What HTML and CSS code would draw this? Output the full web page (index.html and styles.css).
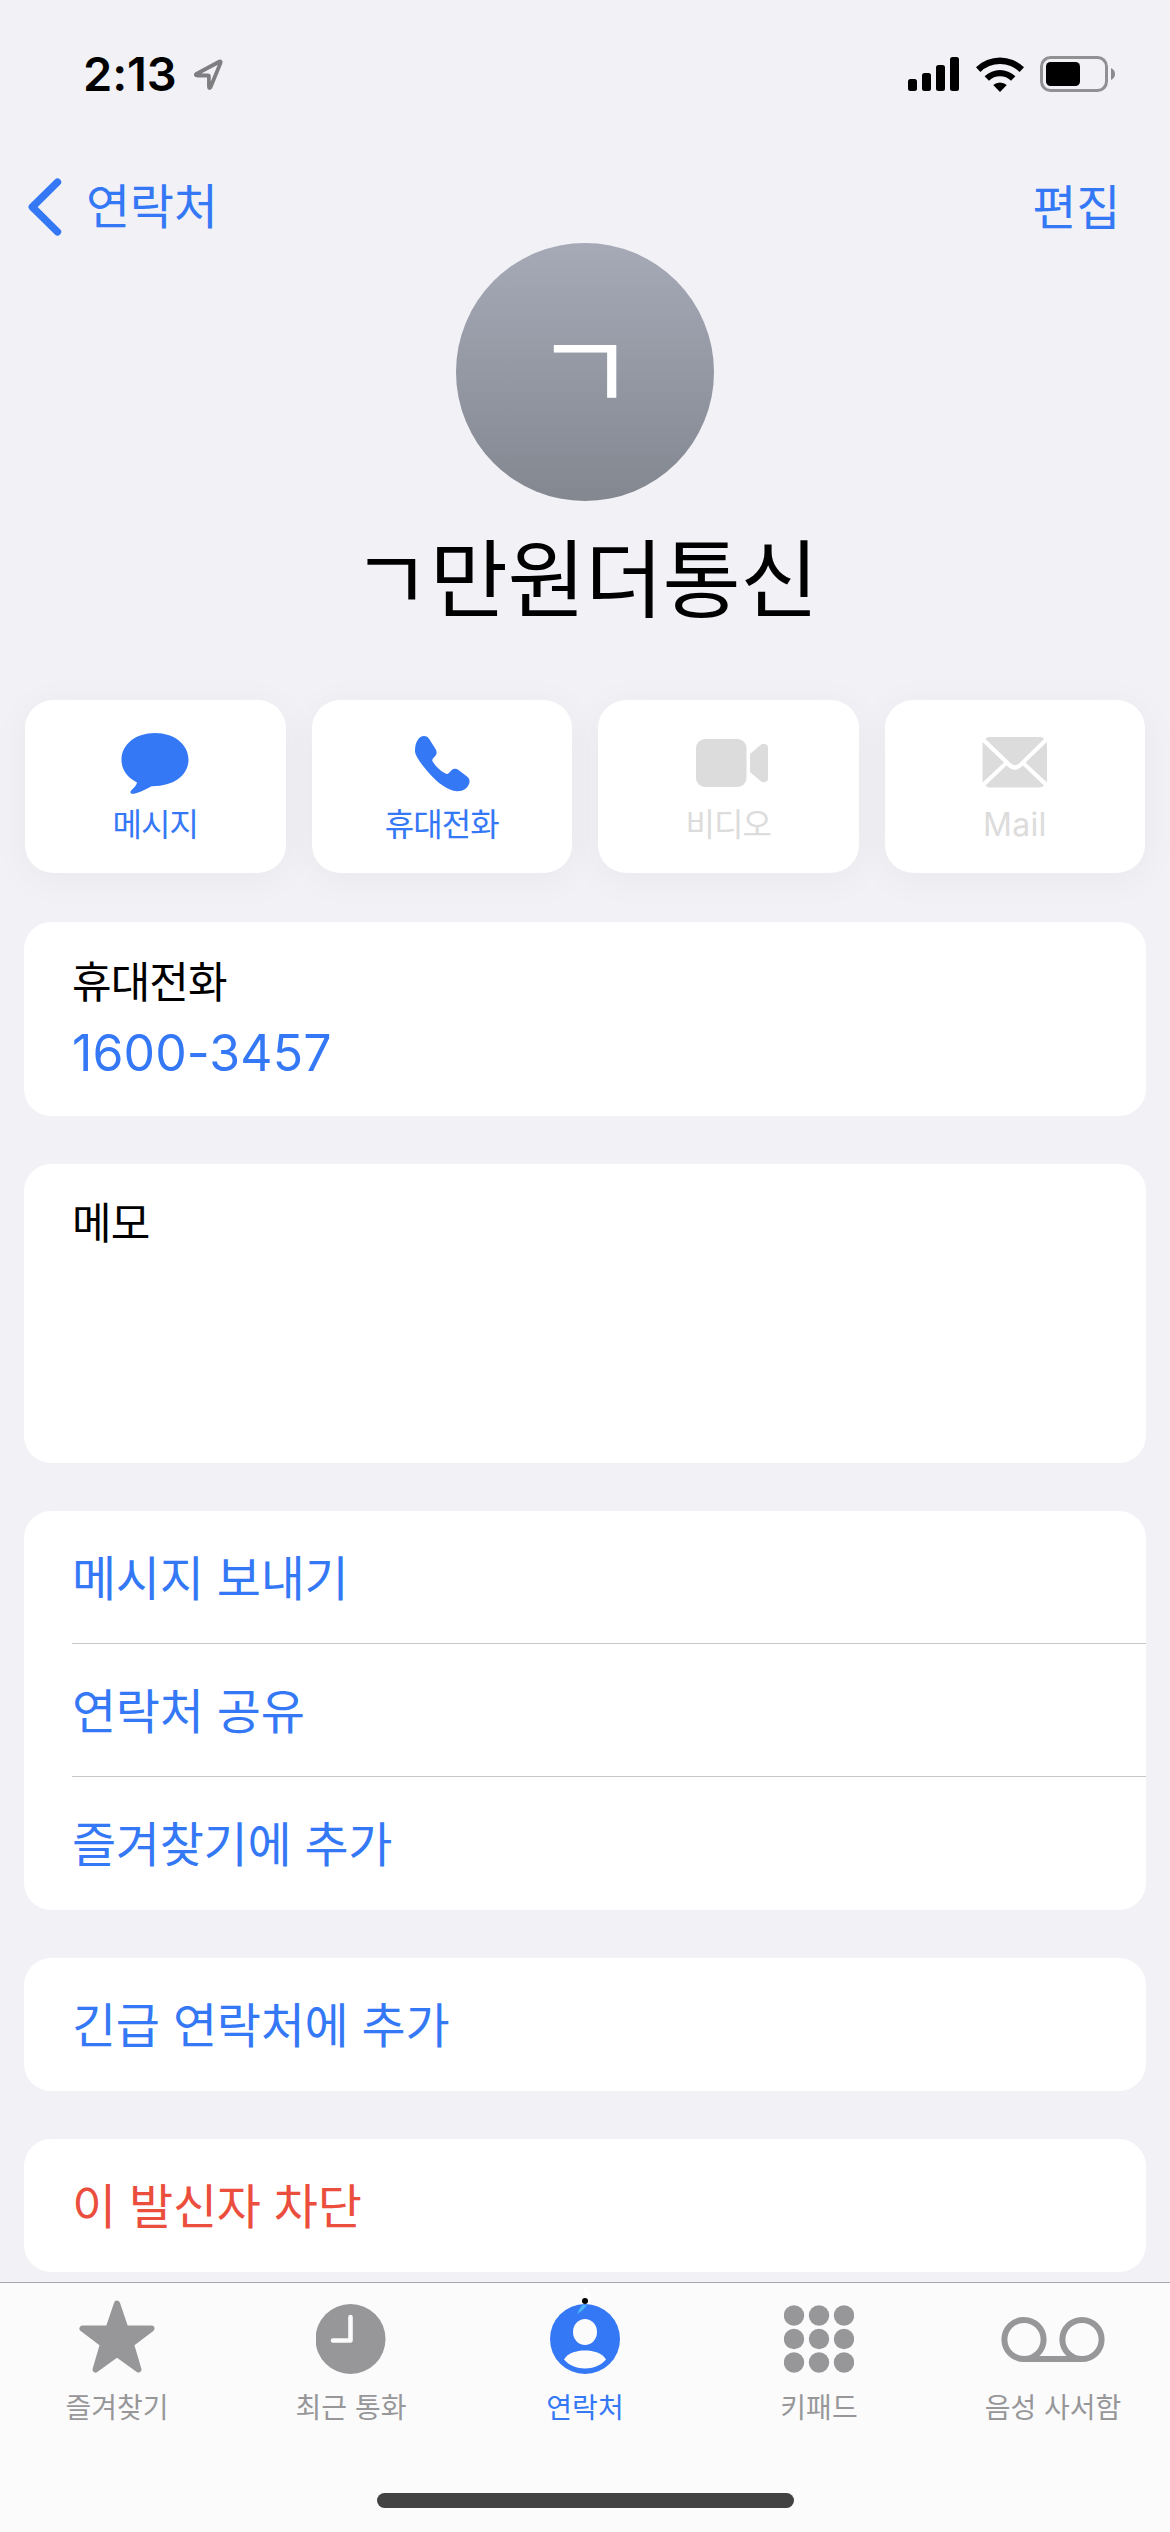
FILE: index.html
```html
<!DOCTYPE html>
<html lang="ko">
<head>
<meta charset="utf-8">
<title>연락처</title>
<link rel="stylesheet" href="styles.css">
</head>
<body>
<div class="screen">
  <header class="status">
    <div class="status-left">
      <span class="time">2:13</span>
      <svg class="location" width="29" height="31" viewBox="0 0 28 28" preserveAspectRatio="none"><path d="M2.2 13.6 24.6 2.4Q26.2 1.8 25.6 3.6L16 25.4Q14.6 27 14.4 25V15.6Q14.4 14.8 13.4 14.8H3Q1 14.6 2.2 13.6Z" fill="none" stroke="#7f7f82" stroke-width="3.6" stroke-linejoin="round"/></svg>
    </div>
    <div class="status-right">
      <svg width="52" height="34" viewBox="0 0 52 34"><rect y="22" width="9" height="12" rx="2.5"/><rect x="14" y="16" width="9" height="18" rx="2.5"/><rect x="28" y="8" width="9" height="26" rx="2.5"/><rect x="42" width="9" height="34" rx="2.5"/></svg>
      <svg class="wifi" width="48" height="36" viewBox="0 0 48 36"><path d="M0 11.3A34.5 34.5 0 0 1 48 11.3L43.6 15.9A28 28 0 0 0 4.4 15.9ZM8.600 20.200A22.300 22.300 0 0 1 39.400 20.200L35 24.800A15.800 15.800 0 0 0 13 24.800ZM17.200 29.100A9.900 9.900 0 0 1 30.800 29.100L24 36Z"/></svg>
      <svg class="battery" width="76" height="36" viewBox="0 0 76 36"><rect x="1.5" y="1.5" width="65" height="33" rx="9" fill="none" stroke="#919194" stroke-width="3"/><rect x="6" y="6" width="34" height="24" rx="4.5"/><path d="M71 12Q75 14 75 18T71 24Z" fill="#8b8b8e"/></svg>
    </div>
  </header>

  <nav class="navbar">
    <a class="back">
      <svg width="34" height="58" viewBox="0 0 34 58"><path d="M29.5 4.2 4.3 29 29.5 53.8" fill="none" stroke="currentColor" stroke-width="7.4" stroke-linecap="round" stroke-linejoin="round"/></svg>
      <span>연락처</span>
    </a>
    <a>편집</a>
  </nav>

  <section class="profile">
    <div class="avatar"><span>ㄱ</span></div>
    <h1>ㄱ만원더통신</h1>
  </section>

  <section class="actions">
    <a class="action">
      <svg width="68" height="62" viewBox="0 0 68 62"><path d="M34 1C53 1 67.500 13.500 67.500 31C67.500 48 53 61 30.500 60.500C25 64 16 69 11.500 69C9 69 9 66.500 10.500 65C13 62.500 15.500 59.500 16 56.500C6 50.500 .5 42 .5 31C.5 13.500 15 1 34 1Z" transform="scale(1 .895)" fill="currentColor"/></svg>
      <span>메시지</span>
    </a>
    <a class="action">
      <svg width="56" height="62" viewBox="0 0 56 62"><path d="M1 19C1 10 5 4 10 4C12.500 4 14 5 15.200 7L21.500 17C23.300 20 22.800 22 21 24.300L18.800 26.800C18 27.800 18.200 28.700 18.800 29.800C21.500 34 26 38.800 31.500 41.500C32.800 42.200 34 42 34.800 41L37 38.700C39.500 36.200 42 36.200 44.500 38L53 44.500C55.300 46.400 56 48.500 55.300 51.300C53.500 56.500 49 59.500 43 59.300C34 58.700 23.500 51 14.500 40.500C6.500 31 1 23.500 1 19Z" fill="currentColor"/></svg>
      <span>휴대전화</span>
    </a>
    <a class="action disabled">
      <svg class="video" width="72" height="62" viewBox="0 0 72 62"><rect y="7" width="50.500" height="48" rx="9" fill="currentColor"/><path d="M54 22 64.500 13Q66 11.700 68 11.700Q72 12.100 72 15.500V46.500Q72 49.500 68.500 50.300Q66 50.500 64.500 49L54 40Z" fill="currentColor"/></svg>
      <span>비디오</span>
    </a>
    <a class="action disabled">
      <svg width="66" height="62" viewBox="0 0 66 62"><path d="M7 5H58Q61 5 62 7L37 31.500Q33 35 29 31.500L3.500 7Q5 5 7 5ZM.5 10 22 30.500.5 50.500ZM65 10V50.500L43.500 30.500ZM24.500 33.500Q33 42 41 33.500L62 53.500Q60 55.500 58 55.500H7Q5 55.500 3.500 53.500Z" fill="currentColor"/></svg>
      <span class="latin">Mail</span>
    </a>
  </section>

  <main class="cards">
    <section class="card phone"><span class="label">휴대전화</span><a class="number">1600-3457</a></section>
    <section class="card memo"><span class="label">메모</span></section>
    <section class="card list">
      <a class="row">메시지 보내기</a>
      <a class="row">연락처 공유</a>
      <a class="row">즐겨찾기에 추가</a>
    </section>
    <section class="card list"><a class="row">긴급 연락처에 추가</a></section>
    <section class="card list"><a class="row danger">이 발신자 차단</a></section>
  </main>

  <footer class="tabbar">
    <div class="tabs">
      <a class="tab">
        <svg width="76" height="74" viewBox="0 0 76 74"><path d="M38 3.500 46.500 28.500H72.500L52 44 59.500 69.500 38 54 16.500 69.500 24 44 3.500 28.500H29.500Z" fill="currentColor" stroke="currentColor" stroke-width="6" stroke-linejoin="round"/></svg>
        <span>즐겨찾기</span>
      </a>
      <a class="tab">
        <svg width="70" height="74" viewBox="0 0 70 74"><circle cx="34.500" cy="39" r="35" fill="currentColor"/><path d="M34.500 17V40.500H17" fill="none" stroke="#fbfbfb" stroke-width="4.600" stroke-linecap="round" stroke-linejoin="round"/></svg>
        <span>최근 통화</span>
      </a>
      <a class="tab active">
        <svg width="70" height="74" viewBox="0 0 70 74" overflow="visible"><circle cx="35" cy="39" r="35" fill="currentColor"/><ellipse cx="35" cy="32" rx="12" ry="13" fill="#fbfbfb"/><path d="M14 59.500C18 53 26 50.500 35 50.500S52 53 56 59.500C51 65.500 43 68.500 35 68.500S19 65.500 14 59.500Z" fill="#fbfbfb"/><path d="M34 -14Q44 -7 41 4H35Z" fill="#fff"/><path d="M27 14Q30 7 33 5H37Q34 10 27 14Z" fill="#4bb4fb"/><circle cx="35" cy="1" r="3"/></svg>
        <span>연락처</span>
      </a>
      <a class="tab">
        <svg width="70" height="74" viewBox="0 0 70 74" fill="currentColor"><circle cx="10" cy="15.500" r="10.200"/><circle cx="35" cy="15.500" r="10.200"/><circle cx="60" cy="15.500" r="10.200"/><circle cx="10" cy="39" r="10.200"/><circle cx="35" cy="39" r="10.200"/><circle cx="60" cy="39" r="10.200"/><circle cx="10" cy="62.500" r="10.200"/><circle cx="35" cy="62.500" r="10.200"/><circle cx="60" cy="62.500" r="10.200"/></svg>
        <span>키패드</span>
      </a>
      <a class="tab">
        <svg width="104" height="74" viewBox="0 0 104 74" fill="none" stroke="currentColor" stroke-width="6"><circle cx="23" cy="39.500" r="19.600"/><circle cx="81" cy="39.500" r="19.600"/><path d="M23 59H81"/></svg>
        <span>음성 사서함</span>
      </a>
    </div>
    <div class="home-bar"></div>
  </footer>
</div>
</body>
</html>
```
FILE: styles.css
```css
* { box-sizing: border-box; }
body { margin: 0; background: #f1f1f6; }
svg { display: block; flex: none; }

.screen {
  width: 1170px;
  height: 2532px;
  display: flex;
  flex-direction: column;
  overflow: hidden;
  font-family: Inter, "Noto Sans CJK KR", sans-serif;
  font-size: 48px;
  letter-spacing: -0.3px;
  color: #000;
  background: #f1f1f6;
}

.status {
  height: 148px;
  padding: 0 54px 0 83px;
  display: flex;
  justify-content: space-between;
  align-items: center;
}
.status-left { display: flex; align-items: center; gap: 17px; }
.time { font-size: 47px; font-weight: 600; letter-spacing: -0.1px; line-height: 60px; }
.status-right { display: flex; align-items: center; gap: 16px; }

.navbar {
  height: 95px;
  padding: 13px 50px 0 28px;
  display: flex;
  justify-content: space-between;
  align-items: flex-start;
  line-height: 94px;
  color: #3478f6;
}
.navbar a { height: 92px; }
.back { display: flex; align-items: center; gap: 24px; }

.profile { display: flex; flex-direction: column; align-items: center; }
.avatar {
  width: 258px;
  height: 258px;
  border-radius: 50%;
  display: flex;
  justify-content: center;
  background: linear-gradient(#a6aab7, #838790);
  color: #fff;
  font-size: 111px;
  line-height: 260px;
}
h1 { margin: 19px 0 0; font-size: 85px; font-weight: 400; line-height: 122px; letter-spacing: -0.6px; }

.actions {
  margin-top: 58px;
  padding: 0 25px;
  display: grid;
  grid-template-columns: repeat(4, 1fr);
  gap: 26px;
}
.action {
  height: 173px;
  padding-top: 32px;
  border-radius: 28px;
  display: flex;
  flex-direction: column;
  align-items: center;
  background: #fff;
  color: #3478f6;
  font-size: 32px;
  line-height: 40px;
  letter-spacing: -1px;
  box-shadow: 0 6px 40px rgba(0, 0, 0, 0.045);
}
.action span { margin-top: 11px; }
.action .latin { letter-spacing: 0.3px; }
.video { margin-left: 8px; }
.action.disabled { color: #dcdcdc; }

.cards { padding: 49px 24px 0; display: flex; flex-direction: column; gap: 48px; }
.card { border-radius: 27px; background: #fff; overflow: hidden; }
.label { font-size: 43px; line-height: 60px; letter-spacing: -0.9px; }
.phone { height: 194px; padding: 30px 48px; display: flex; flex-direction: column; }
.number { font-size: 50px; line-height: 82px; letter-spacing: 0.1px; color: #3478f6; }
.memo { height: 299px; padding: 29px 48px; display: flex; }
.row {
  display: block;
  height: 133px;
  margin-left: 48px;
  line-height: 135px;
  color: #3478f6;
  border-bottom: 1px solid #c6c6c8;
}
.row:last-child { border-bottom: 0; }
.danger { color: #eb4e3d; }

.tabbar {
  height: 250px;
  margin-top: auto;
  border-top: 1px solid #a9a9ad;
  background: #fbfbfc;
  display: flex;
  flex-direction: column;
  align-items: center;
}
.tabs { width: 100%; display: grid; grid-template-columns: repeat(5, 1fr); color: #979799; }
.tab {
  padding-top: 17px;
  display: flex;
  flex-direction: column;
  align-items: center;
  font-size: 28px;
  line-height: 40px;
  letter-spacing: 0;
}
.tab span { margin-top: 14px; }
.active { color: #3478f6; }
.home-bar { width: 417px; height: 15px; margin-top: 65px; border-radius: 8px; background: #424242; }
```
